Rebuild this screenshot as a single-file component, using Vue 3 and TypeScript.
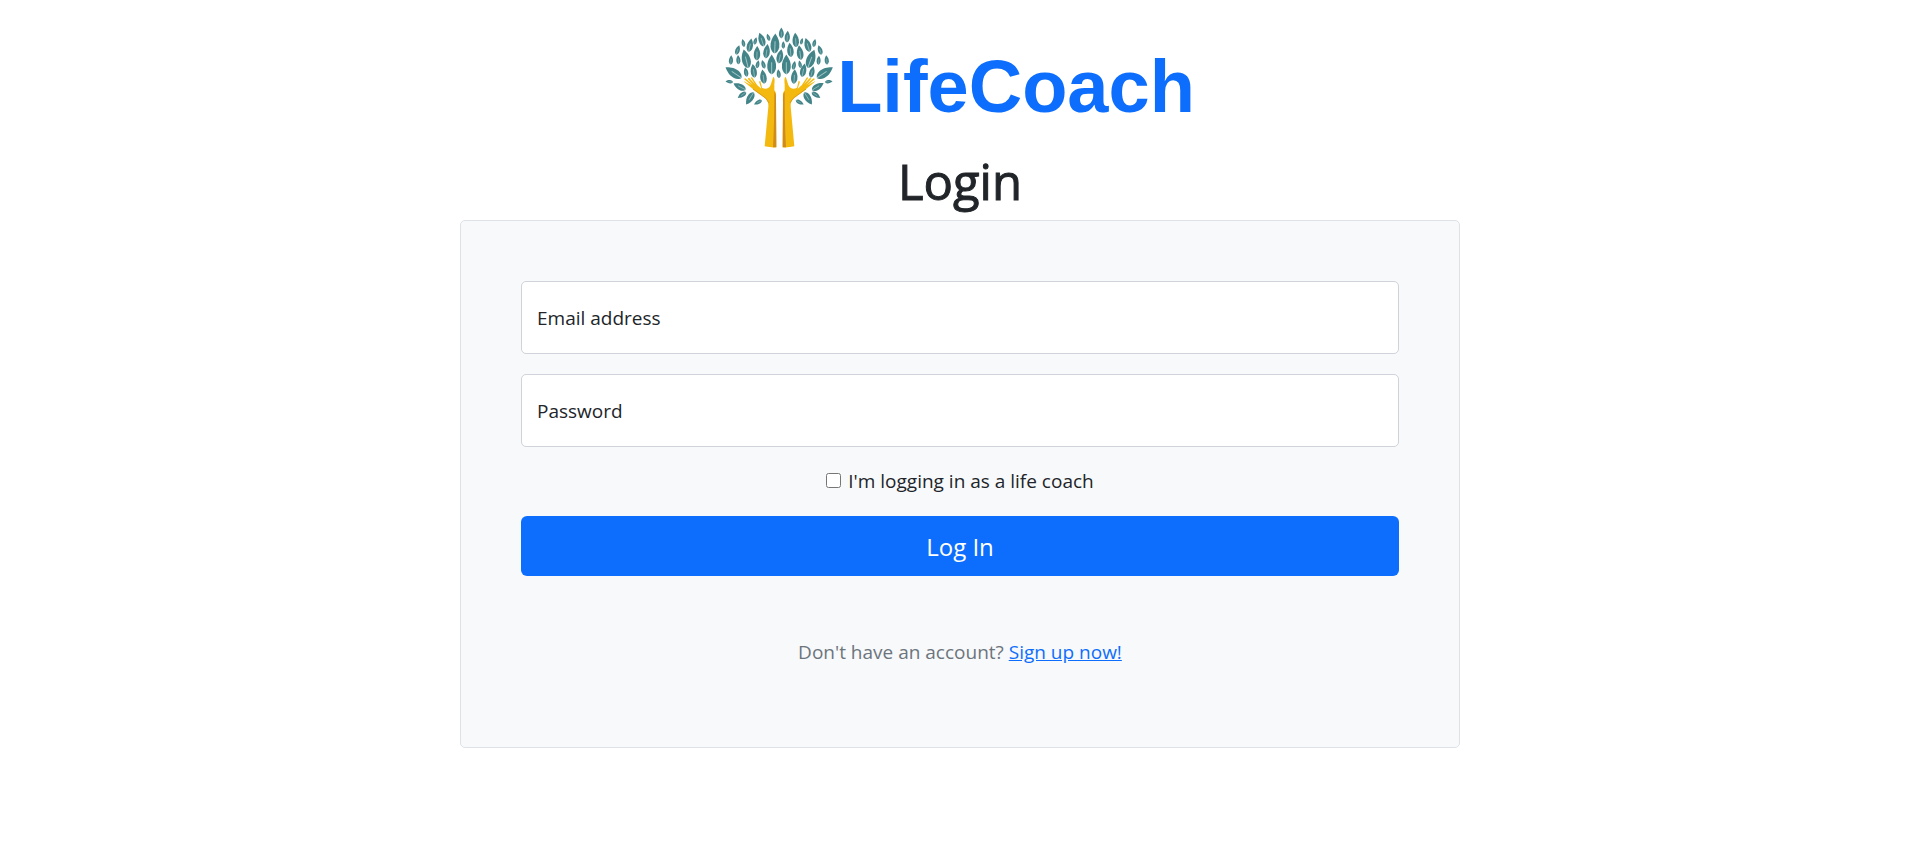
<script setup lang="ts">
import { ref } from 'vue'

interface Leaf {
  x: number
  y: number
  size: number
  angle: number
}

const email = ref('')
const password = ref('')
const isCoach = ref(false)

const toLeaf = ([x, y, size, angle]: number[]): Leaf => ({ x, y, size, angle })

const leaves: Leaf[] = [
  [211, 54, 32, 0], [229, 65, 34, 4], [192, 86, 58, 2], [152, 74, 42, -18], [172, 67, 22, -18],
  [133, 78, 22, 16], [117, 91, 40, 12], [97, 84, 23, -12], [80, 105, 29, 18], [60, 135, 27, 4],
  [254, 75, 42, -4], [272, 79, 19, 14], [290, 90, 42, -16], [310, 84, 24, 12], [327, 105, 29, -18],
  [347, 135, 27, -6], [138, 115, 42, 2], [167, 109, 42, 8], [105, 132, 56, -14], [82, 134, 27, -4],
  [182, 149, 58, 0], [217, 90, 22, 0], [238, 105, 42, -6], [267, 113, 43, -8], [207, 124, 42, 12],
  [226, 149, 58, 0], [300, 132, 56, 20], [323, 136, 26, 4], [140, 148, 24, 12], [157, 148, 26, -16],
  [249, 151, 26, 12], [267, 148, 22, -12], [128, 168, 40, -8], [105, 171, 28, -10], [157, 185, 42, -8],
  [203, 176, 26, -6], [250, 185, 42, 4], [277, 166, 40, 12], [303, 171, 34, 14],
  [68, 173, 56, -56], [341, 173, 56, 56], [55, 200, 22, -85], [353, 200, 22, 85],
  [86, 215, 40, -62], [320, 215, 40, 58], [93, 240, 30, -125], [315, 240, 30, 125],
  [117, 250, 42, -148], [291, 250, 42, 148], [141, 262, 26, -118], [266, 262, 26, 118],
].map(toLeaf)

const leafTransform = (leaf: Leaf): string =>
  `translate(${leaf.x} ${leaf.y}) rotate(${leaf.angle}) scale(${leaf.size / 40})`
</script>

<template>
  <main class="page">
    <div class="brand">
      <svg class="tree" viewBox="42 36 324 366" aria-hidden="true">
        <g v-for="(leaf, i) in leaves" :key="i" :transform="leafTransform(leaf)">
          <path class="leaf" d="M0-21C7-11 10-4 9 7C8 14 4 19 0 20C-4 19-8 14-9 7C-10-4-7-11 0-21Z" />
          <path class="vein" d="M0 20V-5" />
        </g>
        <g v-for="side in ['', 'translate(411 0) scale(-1 1)']" :key="side" :transform="side || undefined">
          <path
            class="hand"
            d="M161 394L172 275C173 263 169 254 158 246L132 227L101 202L98 198L121 211L99 192L103 190L126 209L110 191L114 188L132 208L119 188L123 187L139 211L151 221L144 200L148 197L153 218C162 223 172 222 177 214C181 206 183 195 187 185C192 189 191 198 190 208L190 226C195 231 196 238 195 248L196 397Q178 398 161 394Z"
          />
          <path class="shade" d="M190 230C196 236 195 248 195 262L196 397L186 397C189 345 190 285 190 230Z" />
          <path class="crease" d="M126 222L151 240Q168 249 174 264" />
        </g>
      </svg>
      <span class="brand-name">LifeCoach</span>
    </div>
    <h1 class="title">Login</h1>

    <form class="card" @submit.prevent>
      <div class="field">
        <input id="email" v-model="email" type="email" placeholder=" " />
        <label for="email">Email address</label>
      </div>
      <div class="field">
        <input id="password" v-model="password" type="password" placeholder=" " />
        <label for="password">Password</label>
      </div>
      <div class="check">
        <input id="coach" v-model="isCoach" type="checkbox" />
        <label for="coach">I'm logging in as a life coach</label>
      </div>
      <button class="submit" type="submit">Log In</button>
      <p class="signup">Don't have an account? <a href="#signup">Sign up now!</a></p>
    </form>
  </main>
</template>

<style>
body {
  margin: 0;
  background: #fff;
}
</style>

<style scoped>
.page {
  box-sizing: border-box;
  max-width: 1000px;
  margin: 0 auto;
  padding-top: 27px;
  font-family: "Segoe UI", "Open Sans", "Noto Sans", sans-serif;
  font-size: 19px;
  line-height: 30px;
  color: #212529;
}

.brand {
  display: flex;
  justify-content: center;
  align-items: flex-start;
  gap: 4px;
}

.tree {
  width: 108px;
  height: 122px;
}

.leaf {
  fill: #438488;
}

.vein {
  fill: none;
  stroke: #a5c8c8;
  stroke-width: 2;
}

.hand {
  fill: #f4b90f;
}

.shade {
  fill: #cf8c1d;
}

.crease {
  fill: none;
  stroke: #dc9c18;
  stroke-width: 3;
}

.brand-name {
  font-family: "Liberation Sans", Arial, sans-serif;
  font-size: 74px;
  font-weight: 700;
  line-height: 120px;
  color: #0d6efd;
}

.title {
  margin: 0;
  padding: 2px 0 9px;
  font-size: 49px;
  font-weight: 500;
  line-height: 60px;
  text-align: center;
  -webkit-text-stroke: 1px currentColor;
}

.card {
  display: flex;
  flex-direction: column;
  gap: 20px;
  padding: 60px;
  border: 1px solid #dee2e6;
  border-radius: 5px;
  background: #f8f9fb;
}

.field {
  position: relative;
}

.field input {
  display: block;
  box-sizing: border-box;
  width: 100%;
  height: 73px;
  padding: 26px 16px 8px;
  border: 1px solid #ced4da;
  border-radius: 5px;
  background: #fff;
  font: inherit;
  color: inherit;
}

.field label {
  position: absolute;
  top: 22px;
  left: 16px;
  pointer-events: none;
}

.field input:not(:placeholder-shown) + label {
  top: 4px;
  font-size: 16px;
}

.check {
  display: flex;
  justify-content: center;
  align-items: center;
  gap: 7px;
  line-height: 29px;
}

.check input {
  width: 15px;
  height: 15px;
  margin: 0 0 3px;
}

.submit {
  height: 60px;
  padding: 0 20px;
  border: 0;
  border-radius: 6px;
  background: #0d6efd;
  font-family: inherit;
  font-size: 24px;
  color: #fff;
}

.signup {
  margin: 41px 0 20px;
  color: #6c757d;
  text-align: center;
}

.signup a {
  color: #0d6efd;
}
</style>
